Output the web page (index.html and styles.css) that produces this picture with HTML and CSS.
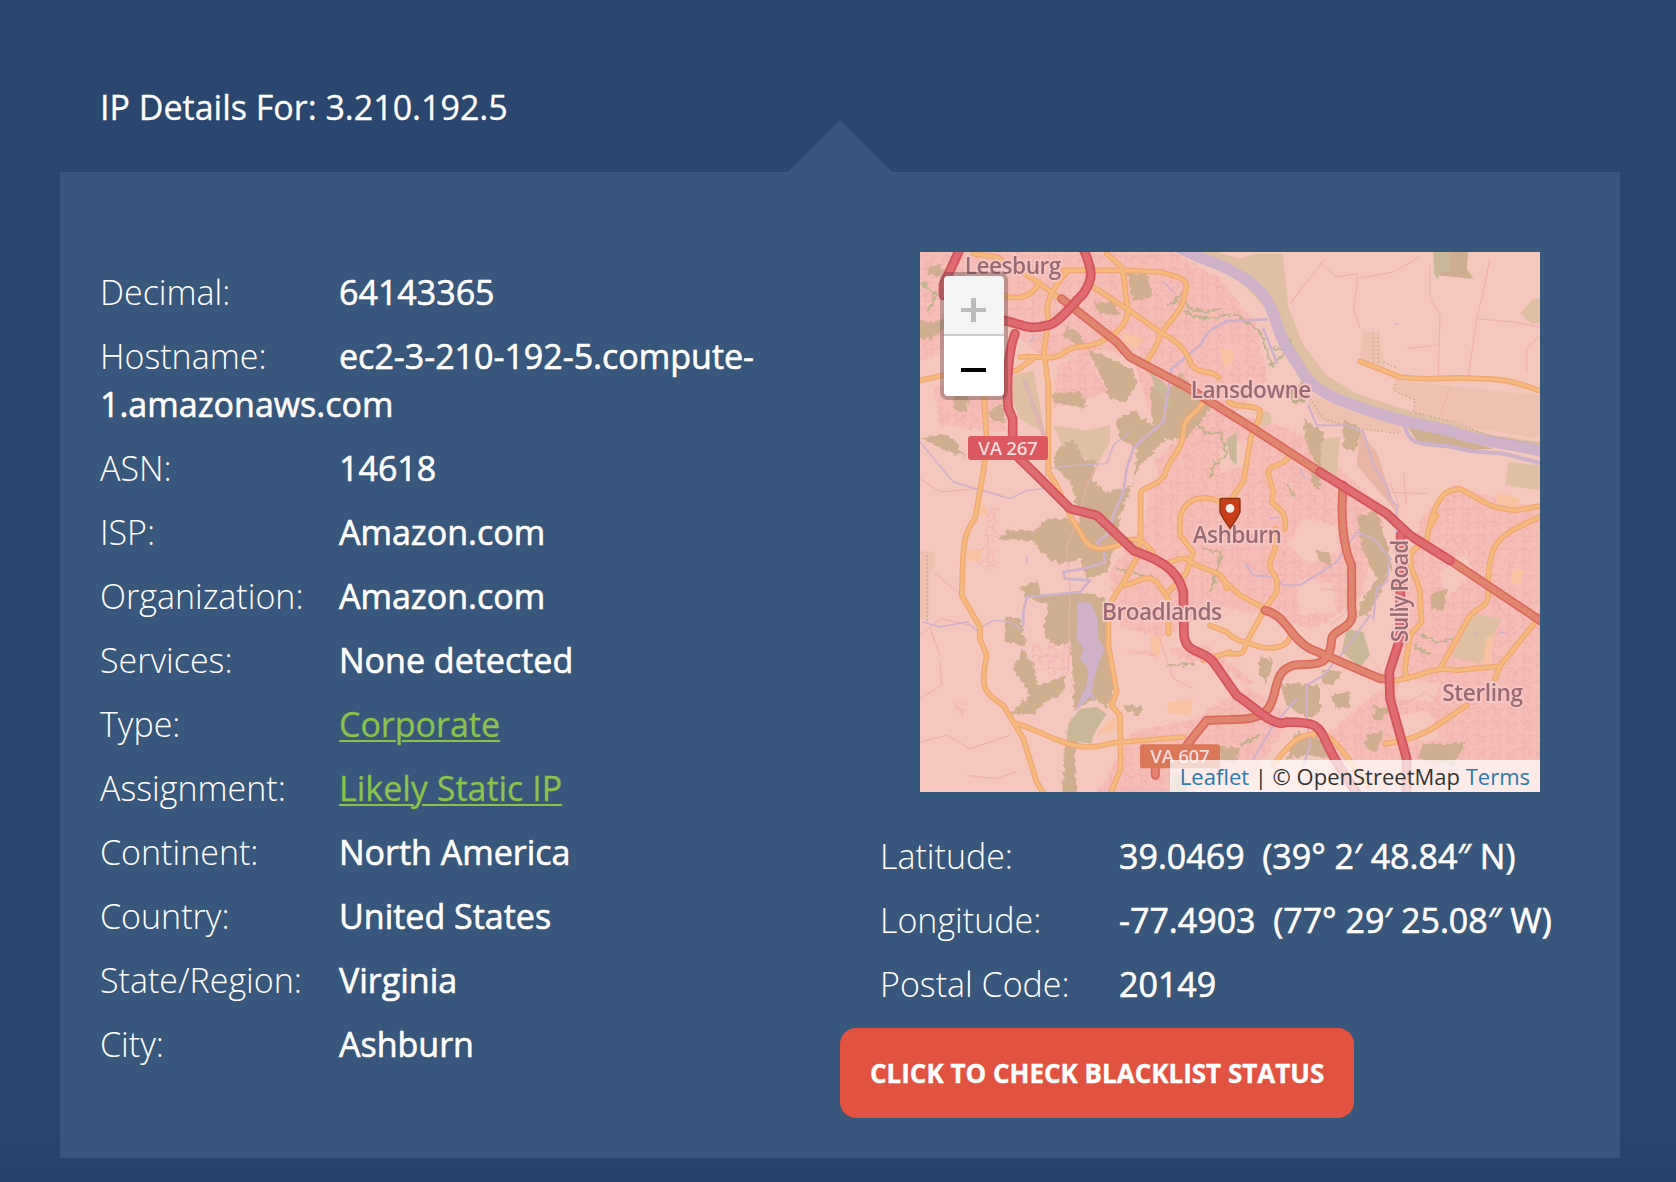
FILE: index.html
```html
<!DOCTYPE html>
<html lang="en">
<head>
<meta charset="utf-8">
<title>IP Details For: 3.210.192.5</title>
<link rel="stylesheet" href="styles.css">
</head>
<body>
<h1 class="title">IP Details For: 3.210.192.5</h1>
<main class="panel">
  <section class="details">
    <p class="row"><span class="label">Decimal:</span><span class="value">64143365</span></p>
    <p class="row"><span class="label">Hostname:</span><span class="value">ec2-3-210-192-5.compute-1.amazonaws.com</span></p>
    <p class="row"><span class="label">ASN:</span><span class="value">14618</span></p>
    <p class="row"><span class="label">ISP:</span><span class="value">Amazon.com</span></p>
    <p class="row"><span class="label">Organization:</span><span class="value">Amazon.com</span></p>
    <p class="row"><span class="label">Services:</span><span class="value">None detected</span></p>
    <p class="row"><span class="label">Type:</span><a class="value link">Corporate</a></p>
    <p class="row"><span class="label">Assignment:</span><a class="value link">Likely Static IP</a></p>
    <p class="row"><span class="label">Continent:</span><span class="value">North America</span></p>
    <p class="row"><span class="label">Country:</span><span class="value">United States</span></p>
    <p class="row"><span class="label">State/Region:</span><span class="value">Virginia</span></p>
    <p class="row"><span class="label">City:</span><span class="value">Ashburn</span></p>
  </section>
  <section class="location">
    <div class="map">
      <svg class="tiles" viewBox="0 0 1860 1620" width="620" height="540">
        <defs>
          <pattern id="streets" width="46" height="40" patternUnits="userSpaceOnUse">
            <path d="M0 12 L20 8 L46 14 M14 0 L20 8 L17 40 M34 11 L38 40 M17 27 L36 25" fill="none" stroke="#efaeab" stroke-width="2.5"/>
          </pattern>
          <filter id="ragged" filterUnits="userSpaceOnUse" x="-40" y="-40" width="1940" height="1700">
            <feTurbulence type="fractalNoise" baseFrequency=".07" numOctaves="2" seed="4"/>
            <feDisplacementMap in="SourceGraphic" scale="22" xChannelSelector="R" yChannelSelector="G"/>
          </filter>
        </defs>
        <rect width="1860" height="1620" fill="#f5c8be"/>
        <!-- built-up areas -->
        <g filter="url(#ragged)">
        <g fill="#f5beb6">
          <path d="M0 0H760L900 80L1010 220L1040 380L880 560L700 500L640 330L560 290L380 330L250 210L0 330Z"/>
          <path d="M40 400L240 380L260 540L60 520ZM410 340L500 300L560 420L400 470Z"/>
          <path d="M860 480L1040 500L1160 560L1400 780L1320 1040L1180 1130L900 1060L720 1160L600 1120L570 960L680 800L690 640Z"/>
          <path d="M600 1200L860 1180L1000 1290L820 1400L640 1440L520 1640L700 1640L1000 1580L1110 1400L900 1240Z"/>
          <path d="M1500 800L1600 700L1880 780V1640H1300L1180 1480L1420 1280L1440 1000Z"/>
        </g>
        <g fill="url(#streets)">
          <path d="M0 0H760L900 80L1010 220L1040 380L880 560L700 500L640 330L560 290L380 330L250 210L0 330Z"/>
          <path d="M40 400L240 380L260 540L60 520ZM410 340L500 300L560 420L400 470ZM180 780L240 760L230 960L170 940ZM330 1180L460 1160L440 1280L330 1250ZM90 1350L140 1340L130 1400Z"/>
          <path d="M860 480L1040 500L1160 560L1400 780L1320 1040L1180 1130L900 1060L720 1160L600 1120L570 960L680 800L690 640Z"/>
          <path d="M600 1200L860 1180L1000 1290L820 1400L640 1440L520 1640L700 1640L1000 1580L1110 1400L900 1240Z"/>
          <path d="M1500 800L1600 700L1880 780V1640H1300L1180 1480L1420 1280L1440 1000Z"/>
        </g>
        <!-- open ground between subdivisions -->
        <g fill="#f5c8be">
          <path d="M900 590L1000 560L980 640L900 660ZM1150 800L1250 820L1260 900L1170 940L1100 880ZM1130 980L1240 990L1250 1080L1140 1090ZM720 1180L790 1220L760 1300L700 1260ZM1440 1280L1560 1290L1540 1350L1430 1340ZM1560 960L1640 900L1660 960L1580 1040ZM640 620L700 600L720 680L650 700ZM1430 1390L1530 1380L1560 1460L1440 1470ZM60 130L100 160L60 190Z"/>
        </g>
        </g>
        <!-- farmland and parks -->
        <g fill="#e0c0a2">
          <path d="M850 0L890 0L960 20L1000 5L1088 5L1105 165L1150 280L1220 370L1310 425L1430 465L1560 500L1700 545L1860 570V590L1700 560L1480 510L1300 450L1190 400L1090 280L1040 170L960 90Z"/>
          <path d="M280 370L340 355L375 545L300 500L270 430Z"/>
          <path d="M400 520L500 535L570 520V570L530 640L480 610L430 590Z"/>
          <path d="M1765 630L1860 640V715L1755 700ZM1800 185L1840 140H1860V210L1835 215Z"/>
          <path d="M1660 1085L1745 1100L1680 1235L1595 1215Z"/>
          <path d="M1020 475L1050 480L1055 510L1030 525L1012 515ZM1195 560L1260 555L1250 680L1190 640Z"/>
        </g>
        <g fill="#edc2b1">
          <path d="M1330 235L1375 240L1395 350L1320 325ZM1430 385L1860 430V560L1640 525L1478 480L1485 445L1420 415Z"/>
          <path d="M1170 425L1300 480L1440 520L1445 545L1320 530L1200 510L1165 450Z"/>
          <path d="M0 895L40 900L46 940L30 965L25 1105L0 1100Z"/>
          <path d="M1320 540L1370 600L1430 780L1310 640Z" fill="#e8b6a4"/>
        </g>
        <g fill="#f8c3a2">
          <path d="M610 240L670 260L650 290L600 275ZM900 290H940V330L910 345ZM140 890L185 893L180 930L140 925ZM690 1150L730 1160L715 1215L695 1200ZM740 1350L820 1340L810 1390L745 1385ZM170 760H200V790H170ZM1735 720L1800 740L1790 770L1730 750ZM1780 950L1815 955L1800 1000L1770 990ZM540 1430L590 1390V1430L530 1450ZM1700 1155L1720 1155L1710 1235L1690 1235Z"/>
        </g>
        <!-- woodland -->
        <g filter="url(#ragged)">
        <g fill="#ceae8f">
          <path d="M0 200L40 215L75 195L80 230L30 260L0 255ZM20 50L60 35L80 60L50 75L25 65ZM620 60L680 65L700 130L640 150ZM440 220L480 245L500 290L460 270L430 250ZM520 150L580 150L600 190L540 185Z"/>
          <path d="M500 290L570 320L640 355L650 390L620 450L570 440L540 370Z"/>
          <path d="M0 560L60 545L100 560L125 600L140 615L90 600L40 575ZM100 430L145 435L140 480L105 475ZM200 490L240 455L260 510L220 500Z"/>
          <path d="M400 425L480 420L500 450L490 470L440 460L400 450ZM410 590L460 560L490 620L530 630L520 690L560 720L640 700L650 590L600 560L590 500L640 480L700 520L690 400L740 420L780 360L830 430L880 460L800 560L740 560L660 640L600 790L590 870L540 950L510 980L470 880L480 790L450 690L400 640Z"/>
          <path d="M235 860L270 830L340 840L380 800L450 800L540 850L590 870L560 960L500 980L480 920L420 940L360 900L340 865L260 865ZM300 1010L350 985L365 1030L430 1025L500 1020L555 1040L565 1120L580 1260L590 1300L560 1370L530 1340L460 1370L455 1170L400 1180L370 1140L385 1050L320 1040ZM255 1090L300 1100L320 1180L255 1170ZM280 1250L310 1190L345 1250L350 1300L440 1270L430 1320L350 1370L345 1390L270 1385L330 1330ZM610 1360L670 1365L660 1390L620 1380Z"/>
          <path d="M450 1400L500 1400L465 1500L470 1640H425L435 1480ZM750 1640L760 1560L800 1580V1640Z"/>
          <path d="M1150 500L1210 540L1200 650L1160 590ZM1270 500L1330 535L1300 600L1270 590ZM1170 640L1195 660L1205 720L1180 700Z"/>
          <path d="M1310 790L1370 780L1400 870L1410 900L1400 980L1350 1080L1315 1100L1320 1060L1370 980L1330 900Z"/>
          <path d="M1185 890L1230 905L1235 950L1200 925ZM1330 870L1400 870L1420 960L1340 920ZM1540 1020L1585 1010L1570 1080L1530 1065Z"/>
          <path d="M1080 1295L1200 1300L1200 1380L1160 1400L1100 1360ZM1020 1220L1060 1220L1040 1290L1015 1270ZM1210 1250L1270 1260L1240 1300L1205 1290ZM1230 1330L1290 1320L1285 1370L1250 1365ZM1360 1360L1410 1370L1380 1410L1360 1400ZM1130 1440L1200 1460L1250 1520L1160 1510L1100 1520ZM1340 1450L1390 1440L1370 1500L1335 1490ZM1510 1480L1640 1470L1600 1540L1490 1520ZM900 1480L960 1490L950 1530L900 1525Z"/>
          <path d="M1090 420L1150 390L1170 440L1130 460ZM1080 230L1130 290L1110 300L1070 250Z" fill="#bfae8b"/>
        </g>
        </g>
        <g fill="#ceae8f"><path d="M1460 520L1560 540L1720 590L1640 595L1500 580ZM1550 0H1645L1640 50L1660 80L1600 75L1550 70Z"/></g>
        <g fill="#c9b798">
          <path d="M690 360L740 400L755 470L710 420ZM480 1370L530 1365L560 1385L520 1450L515 1475L440 1465L445 1415ZM1280 1130L1330 1140L1350 1210L1320 1245L1265 1200ZM1540 0H1590L1590 55L1560 65L1550 82L1542 60ZM920 560L950 540V640L930 620Z"/>
        </g>
        <g fill="none" stroke="#c2b18f" stroke-width="7" filter="url(#ragged)">
          <path d="M740 160L790 140L810 170L870 180L900 170M790 180L850 200L930 190M820 510L860 545L900 540L920 610L880 640L870 680M1500 1150L1560 1170L1600 1160M1480 1180L1530 1210M1060 290L1100 290L1090 310L1050 340M940 180L1020 240L1060 350M845 890L905 900L890 960L870 1020M590 950L640 960L700 980M740 1240L820 1235M960 1480L1020 1450M1100 700L1125 740M5 90L50 130L20 180M760 150L800 110"/>
        </g>
        <!-- minor streets -->
        <g fill="none" stroke="#ecb0ad" stroke-width="3">
          <path d="M1110 155L1215 20M1200 30L1250 75L1310 65L1310 110L1300 170L1320 230M1310 80L1420 60L1500 15M1530 40V140L1560 190L1555 370M1460 290L1555 278M1710 20L1690 120L1670 200L1645 370M1670 200L1780 210L1860 225M1860 250L1820 290V360M1590 410L1560 490"/>
          <path d="M0 1150L60 1100L150 1120M60 1230L65 1300L0 1340M0 1470L80 1450L150 1490L270 1450M140 1570L230 1580L290 1560M40 960L100 1010L130 1030M530 640L500 700L480 790L440 880L450 1000L445 1260M30 1130L60 1210M0 680L60 720L170 710L250 730"/>
          <path d="M1410 690L1440 770M1450 660L1460 760M1390 720L1520 725M1200 1010L1290 1020L1280 1080L1230 1120M1370 1240L1440 1360L1520 1320L1600 1400M950 920L1020 960L1100 970M800 700L850 760L920 800M720 1160L760 1280L820 1310M1600 860L1700 1000L1780 1130M1500 1200L1620 1370L1740 1330"/>
        </g>
        <!-- rivers and streams -->
        <g fill="none" stroke="#cfb1c9" stroke-linecap="round" stroke-linejoin="round">
          <path stroke-width="34" d="M780 -12C850 25 900 35 940 60C1010 95 1050 140 1070 215C1090 285 1120 310 1150 365C1190 425 1270 450 1360 480C1460 515 1530 520 1600 540C1700 575 1760 570 1870 600"/>
          <path stroke-width="12" d="M1455 525C1470 590 1520 570 1600 585C1680 610 1730 595 1770 610L1870 635"/>
          <path stroke-width="8" d="M915 208L1040 202M1030 230L1070 330M930 205C870 230 860 240 840 280L755 350L740 440L730 510L670 560L640 590L620 650L610 720L580 790L560 850L530 870L550 890L555 930L490 950L430 960L435 980L510 985L480 1020L320 1035L310 1080V1120"/>
          <path stroke-width="4" d="M0 570L50 630L100 690L200 720L270 740L320 715L370 710L380 650L460 640L560 635L580 580L630 540M10 1110L60 1125L140 1110L170 1135L220 1105L270 1110L310 1135"/>
          <path stroke-width="6" d="M980 940L1000 970L1060 975L1090 1000L1140 1000L1180 975L1250 930L1310 840L1360 860L1410 920L1400 990L1370 1010L1360 1100M1165 460L1190 520L1280 520L1330 540L1360 640L1400 700L1410 740L1430 760V850M1350 1090L1270 1200L1210 1270L1160 1300L1160 1380L1170 1480L1150 1540M1000 1520L1060 1420L1130 1340"/>
          <path stroke-width="12" d="M313 385L370 545" stroke="#ddb4b2"/>
          <path stroke-width="4" d="M730 90L765 125M320 915V930M330 270L345 250M1425 213L1435 218M1140 650L1155 680M1660 1140L1670 1150M1740 1140L1760 1145M1050 800L1075 795"/>
        </g>
        <path fill="#cfb1c9" d="M473 1050L510 1052L530 1090L535 1160L555 1195L540 1220L520 1290L515 1320L530 1350L510 1335L465 1380L485 1330L500 1300L505 1250L480 1220L490 1190L470 1160Z"/>
        <g fill="none" stroke="#bda68a" stroke-width="4" stroke-dasharray="4 8">
          <path d="M1360 245V350M1375 245V350M1390 330L1435 350M1430 385L1420 415L1485 445L1480 480L1600 510L1720 555L1860 575M1170 440L1210 500L1320 530L1440 545M22 910V1110"/>
        </g>
        <!-- secondary roads -->
        <g fill="none" stroke-linecap="round" stroke-linejoin="round">
          <g stroke="#f0a673" stroke-width="17">
            <g id="secondary">
            <path d="M160 5L230 15L330 75L420 140M250 130C310 150 350 120 355 90M430 55H610L720 60C780 75 810 80 795 120C790 180 750 200 720 250C710 290 690 310 675 335M560 5L600 40C620 80 610 110 622 155C635 230 560 260 530 275C480 290 460 275 420 310C390 325 350 310 300 315M440 60C400 110 370 150 385 200L372 300L385 400V660L410 700L450 790L480 840C500 880 520 900 570 885C620 880 600 855 660 865C700 890 690 900 720 930C760 940 760 915 800 920C850 960 890 950 910 980L920 1010M0 385L70 370M190 420L200 560L190 660L165 800C125 850 130 890 125 1030L180 1125L180 1160L200 1210C180 1310 190 1320 250 1360L310 1460L350 1590L380 1640M240 365L290 355L340 320"/>
            <path d="M520 105L620 170L720 240C780 270 800 300 815 340C840 370 870 350 895 375M850 450C830 490 790 490 790 540C790 600 740 620 735 670C700 710 680 700 662 720V860L650 920L605 1000C560 1060 565 1070 565 1180L590 1320L575 1360L600 1390L602 1550L565 1640M910 755C850 720 790 740 780 800V850L820 900L800 960L775 990L745 1020M605 1000C650 1000 670 960 710 990L745 1040L745 1145M290 1415C350 1430 420 1480 500 1485C560 1485 560 1470 610 1470L790 1455M850 1225L930 1200M905 980L960 1030L1035 1070L980 1170C960 1170 940 1160 920 1140L870 1120M980 1170C1040 1200 1100 1190 1110 1155M980 1170C970 1215 960 1205 920 1205"/>
            <path d="M1035 1070L1070 1020C1080 960 1045 970 1050 930L1065 890V830M1320 328L1440 375C1540 390 1570 370 1680 380C1770 380 1810 400 1870 420M925 450C950 470 1000 455 1020 475C1020 520 990 540 990 570L970 690L930 745M1110 610C1090 650 1045 630 1045 665L1060 720L1055 750C1090 780 1100 790 1095 830M1530 810C1560 720 1580 715 1620 710C1680 740 1700 770 1790 775L1870 760M1550 790L1525 830L1522 860L1475 900C1460 960 1500 980 1500 1030L1505 1110L1470 1150L1455 1250L1460 1280M1870 790C1740 850 1710 860 1705 980C1710 1080 1690 1050 1650 1090L1560 1250M1420 1285C1500 1280 1530 1240 1610 1255L1740 1242L1870 1080M1725 1280L1740 1242M1395 1475C1520 1460 1560 1410 1640 1360M1060 1540C1110 1470 1140 1440 1210 1445C1270 1480 1300 1550 1340 1600"/>
            </g>
          </g>
          <use href="#secondary" stroke="#f4ba7d" stroke-width="10"/>
          <!-- primary roads -->
          <g stroke="#d9695c" stroke-width="27">
            <path id="primary" d="M425 140L590 270L630 315L800 405L1000 530L1200 660M1590 925L1870 1112M1270 700C1260 790 1270 890 1295 940L1295 1070C1310 1130 1240 1130 1235 1160C1230 1260 1170 1230 1120 1240C1050 1260 1080 1340 1035 1380C1000 1410 940 1400 860 1405L800 1480M1035 1075C1100 1090 1110 1160 1170 1190L1380 1280H1410M706 1550V1570"/>
          </g>
          <use href="#primary" stroke="#e28570" stroke-width="17"/>
          <!-- motorways -->
          <g stroke="#d4545c" stroke-width="29">
            <path id="motorway" d="M120 -10L70 100V130M490 -10C520 60 520 80 490 125C450 165 410 220 380 220C320 235 320 220 250 205M285 245C260 310 260 420 265 470L278 500V600L350 670L450 770L530 790L640 895C670 910 770 930 790 1020L792 1150C800 1210 850 1190 880 1230L950 1330C1000 1360 1060 1430 1100 1410C1220 1410 1190 1430 1250 1530L1320 1640M1200 660L1400 785L1470 850L1590 925M1442 850L1440 1160L1408 1260L1410 1340L1460 1520V1640"/>
          </g>
          <use href="#motorway" stroke="#e06b70" stroke-width="18"/>
        </g>
        <rect x="144" y="552" width="240" height="72" rx="9" fill="#dc5a5f"/>
        <rect x="660" y="1477" width="240" height="72" rx="9" fill="#dc7659"/>
        <g class="shield">
          <text x="264" y="608" textLength="178">VA 267</text>
          <text x="780" y="1532" textLength="178">VA 607</text>
        </g>
        <g class="place">
          <text x="279" y="67" textLength="290">Leesburg</text>
          <text x="993" y="438" textLength="362">Lansdowne</text>
          <text x="952" y="873" textLength="268">Ashburn</text>
          <text x="726" y="1104" textLength="360">Broadlands</text>
          <text x="1688" y="1347" textLength="242">Sterling</text>
          <text transform="translate(1463 1017) rotate(-90)" textLength="308">Sully Road</text>
        </g>
        <g transform="translate(930 738)">
          <path d="M-26 1H26Q30 1 30 5V42Q24 58 0 91Q-24 58 -30 42V5Q-30 1 -26 1Z" fill="#c93d19" stroke="#8c2f12" stroke-width="4"/>
          <circle cy="31" r="13" fill="#f7efec"/>
        </g>
      </svg>
      <div class="zoom-control"><span class="zoom zoom-in"></span><span class="zoom zoom-out"></span></div>
      <div class="attribution"><a>Leaflet</a> | © OpenStreetMap <a>Terms</a></div>
    </div>
    <p class="row"><span class="label">Latitude:</span><span class="value">39.0469&nbsp; (39° 2′ 48.84″ N)</span></p>
    <p class="row"><span class="label">Longitude:</span><span class="value">-77.4903&nbsp; (77° 29′ 25.08″ W)</span></p>
    <p class="row"><span class="label">Postal Code:</span><span class="value">20149</span></p>
    <button class="button">CLICK TO CHECK BLACKLIST STATUS</button>
  </section>
</main>
</body>
</html>
```
FILE: styles.css
```css
* { box-sizing: border-box; }
body {
  margin: 0;
  height: 1182px;
  padding: 0 56px 0 60px;
  overflow: hidden;
  background: linear-gradient(#2a476f 0, #2a476f 1120px, #274268 1182px);
  color: #fff;
  font: 34px/48px "Open Sans", "Noto Sans", sans-serif;
}
.title {
  margin: 0;
  height: 172px;
  padding: 83px 40px 0;
  font-size: 34px;
  font-weight: 400;
  -webkit-text-stroke: .3px;
}
.panel {
  position: relative;
  display: grid;
  grid-template-columns: 780px 780px;
  width: 1560px;
  height: 986px;
  background: #38577c;
}
.panel::before {
  content: "";
  position: absolute;
  left: 728px;
  top: -52px;
  border: 52px solid transparent;
  border-top: 0;
  border-bottom-color: #38577c;
}
.details { padding: 88px 40px 0; }
.location { padding: 80px 0 0; }
.row { margin: 0; padding: 8px 0; }
.location .row { padding-left: 40px; white-space: nowrap; }
.label { display: inline-block; width: 239px; font-weight: 300; }
.value { font-weight: 500; -webkit-text-stroke: .6px; }
.link { color: #8bc34a; -webkit-text-stroke: .3px; text-decoration: underline; text-decoration-thickness: 2px; text-underline-offset: 3px; }
.map {
  position: relative;
  width: 620px;
  height: 540px;
  margin: 0 0 32px 80px;
  overflow: hidden;
}
.tiles { display: block; filter: blur(.5px); }
.place, .shield { font-family: "Open Sans", "Noto Sans", sans-serif; font-weight: 600; text-anchor: middle; }
.place { font-size: 68px; fill: #9b6b74; stroke: #f5c9c4; stroke-width: 10px; paint-order: stroke; }
.shield { font-size: 56px; fill: #f8dcdc; }
.zoom-control {
  position: absolute;
  left: 20px;
  top: 20px;
  width: 68px;
  height: 128px;
  padding: 4px;
  border-radius: 8px;
  background: rgba(90, 60, 60, .35);
}
.zoom { display: grid; place-items: center; height: 60px; background: #fff; border-radius: 0 0 4px 4px; }
.zoom::before, .zoom::after { content: ""; grid-area: 1 / 1; width: 25px; height: 4px; background: #000; }
.zoom::before { transform: translate(-1px, 4px); }
.zoom-out::after { display: none; }
.zoom-in { background: #f4f4f4; border-bottom: 2px solid #ccc; border-radius: 4px 4px 0 0; }
.zoom-in::before, .zoom-in::after { background: #bbb; transform: translate(-1px, 5px); }
.zoom-in::after { width: 5px; height: 24px; }
.attribution {
  position: absolute;
  right: 0;
  bottom: 0;
  height: 32px;
  padding: 0 10px;
  background: rgba(255, 255, 255, .7);
  color: #333;
  font-size: 22px;
  line-height: 32px;
  white-space: nowrap;
}
.attribution a { color: #2a7aab; }
.button {
  display: block;
  width: 514px;
  height: 90px;
  margin-top: 12px;
  padding: 0 30px;
  justify-self: start;
  border: 0;
  border-radius: 16px;
  background: #e15241;
  color: #fff;
  font: 700 26px/90px "Open Sans", sans-serif;
  text-align: left;
  white-space: nowrap;
  -webkit-text-stroke: .4px;
}
```
